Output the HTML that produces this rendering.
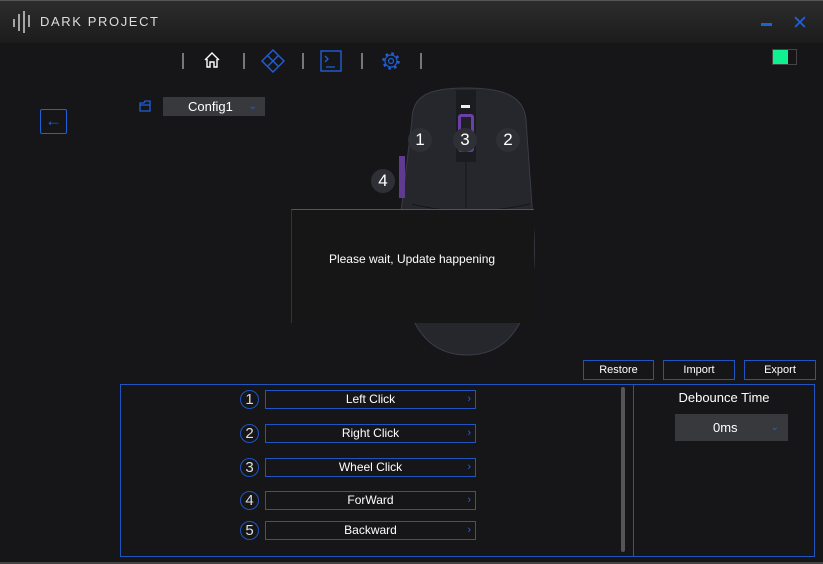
<!DOCTYPE html><html><head><style>
body{margin:0;width:823px;height:564px;background:#161618;font-family:"Liberation Sans",sans-serif;overflow:hidden;position:relative;color:#fff}
.a{position:absolute}
.tb{left:0;top:0;width:823px;height:42px;background:linear-gradient(#2c2c2c,#1c1c1c);border-top:1px solid #555}
.sep{width:2px;height:16px;background:#777;top:53px}
.btn{border:1px solid #1f55c0;font-size:11px;text-align:center;line-height:18px;height:18px;color:#fff}
.row{left:265px;width:209px;height:17px;border:1px solid #1f55c0;font-size:12px;text-align:center;line-height:17px}
.row span{position:absolute;right:4px;color:#2a5fd0;font-size:11px}
.num{left:240px;width:17px;height:17px;border:1px solid #1f55c0;border-radius:50%;font-size:15px;text-align:center;line-height:17px;color:#ddd}
.mn{width:24px;height:24px;border-radius:50%;background:#2e3036;font-size:17px;text-align:center;line-height:24px;color:#fff}
</style></head><body>
<div class="a tb"></div>
<svg class="a" style="left:13px;top:11px" width="20" height="22"><g stroke="#ddd" stroke-width="1.4"><line x1="1" y1="8" x2="1" y2="16"/><line x1="6" y1="3" x2="6" y2="20"/><line x1="11" y1="0" x2="11" y2="22"/><line x1="16" y1="4" x2="16" y2="16"/></g></svg>
<div class="a" style="left:40px;top:14px;font-size:13px;letter-spacing:1.6px;color:#ddd">DARK PROJECT</div>
<div class="a" style="left:761px;top:23px;width:11px;height:3px;background:#1f5fd8"></div>
<div class="a" style="left:792px;top:12px;font-size:19px;color:#1f5fd8">✕</div>
<div class="a sep" style="left:182px"></div><div class="a sep" style="left:243px"></div><div class="a sep" style="left:302px"></div><div class="a sep" style="left:361px"></div><div class="a sep" style="left:420px"></div>
<svg class="a" style="left:203px;top:52px" width="18" height="16"><path d="M2 8 L9 1 L16 8 M4 7 V15 H7 V10 H11 V15 H14 V7" fill="none" stroke="#fff" stroke-width="1.4"/></svg>
<svg class="a" style="left:261px;top:49px" width="24" height="24"><path d="M12 1 L23 12 L12 23 L1 12Z M6.5 6.5 L17.5 17.5 M17.5 6.5 L6.5 17.5" fill="none" stroke="#1f5fd8" stroke-width="1.4"/></svg>
<svg class="a" style="left:320px;top:50px" width="22" height="22"><rect x="1" y="1" width="20" height="20" fill="none" stroke="#1f5fd8" stroke-width="1.4"/><path d="M5 6 L8 9 L5 12 M6 17 H15" fill="none" stroke="#1f5fd8" stroke-width="1.3"/></svg>
<svg class="a" style="left:380px;top:50px" width="22" height="22"><circle cx="11" cy="11" r="7.5" fill="none" stroke="#1f5fd8" stroke-width="2.5" stroke-dasharray="2.6 3.3"/><circle cx="11" cy="11" r="6" fill="#161618" stroke="#1f5fd8" stroke-width="1.2"/><circle cx="11" cy="11" r="2.5" fill="none" stroke="#1f5fd8" stroke-width="1.2"/></svg>
<div class="a" style="left:772px;top:49px;width:23px;height:14px;border:1px solid #444"></div>
<div class="a" style="left:773px;top:50px;width:15px;height:14px;background:#10f090"></div>
<div class="a" style="left:40px;top:109px;width:25px;height:23px;border:1.5px solid #1f5fd8;border-radius:2px;color:#1f5fd8;font-size:17px;text-align:center;line-height:22px">←</div>
<svg class="a" style="left:139px;top:100px" width="13" height="12"><path d="M1 3 H5 L6 1 H11 V11 H1Z M1 5 H11" fill="none" stroke="#1f5fd8" stroke-width="1.3"/></svg>
<div class="a" style="left:163px;top:97px;width:102px;height:19px;background:#38393c;font-size:13px;line-height:19px"><span style="margin-left:25px">Config1</span><span style="position:absolute;right:8px;color:#2a5fd0;font-size:10px">⌄</span></div>
<svg class="a" style="left:396px;top:86px" width="142" height="272"><path d="M16 34 C16 9 34 2 70 2 C106 2 128 9 130 34 L137 134 C144 214 124 269 71 269 C18 269 0 214 4 134Z" fill="#25272d" stroke="#3a3c44"/><rect x="60" y="4" width="20" height="72" fill="#1b1c20"/><rect x="62" y="28" width="16" height="38" rx="3" fill="#6b3fa8"/><rect x="65" y="31" width="10" height="32" fill="#202126"/><rect x="65" y="19" width="9" height="3" fill="#eee"/><rect x="3" y="70" width="6" height="42" fill="#5e3a90"/><path d="M70 76 V122 M16 118 Q70 132 134 118" stroke="#15161a" fill="none"/></svg>
<div class="a mn" style="left:408px;top:128px">1</div><div class="a mn" style="left:453px;top:128px">3</div><div class="a mn" style="left:496px;top:128px">2</div><div class="a mn" style="left:371px;top:169px">4</div>
<div class="a" style="left:291px;top:209px;width:242px;height:113px;background:#161616;border-top:1px solid #555;border-left:1px solid #333"></div>
<div class="a" style="left:291px;top:252px;width:242px;text-align:center;font-size:12px">Please wait, Update happening</div>
<div class="a btn" style="left:583px;top:360px;width:69px">Restore</div>
<div class="a btn" style="left:663px;top:360px;width:70px">Import</div>
<div class="a btn" style="left:744px;top:360px;width:70px">Export</div>
<div class="a" style="left:120px;top:384px;width:512px;height:171px;border:1px solid #1f55c0"></div>
<div class="a" style="left:633px;top:384px;width:180px;height:171px;border:1px solid #1f55c0"></div>
<div class="a" style="left:621px;top:387px;width:4px;height:165px;background:#555;border-radius:2px"></div>
<div class="a num" style="top:390px">1</div><div class="a row" style="top:390px">Left Click<span>›</span></div>
<div class="a num" style="top:424px">2</div><div class="a row" style="top:424px">Right Click<span>›</span></div>
<div class="a num" style="top:458px">3</div><div class="a row" style="top:458px">Wheel Click<span>›</span></div>
<div class="a num" style="top:491px">4</div><div class="a row" style="top:491px">ForWard<span>›</span></div>
<div class="a num" style="top:521px">5</div><div class="a row" style="top:521px">Backward<span>›</span></div>
<div class="a" style="left:634px;top:390px;width:180px;text-align:center;font-size:13px">Debounce Time</div>
<div class="a" style="left:675px;top:414px;width:113px;height:27px;background:#38393c;font-size:13px;line-height:27px"><span style="margin-left:38px">0ms</span><span style="position:absolute;right:9px;color:#2a5fd0;font-size:10px">⌄</span></div>
<div class="a" style="left:0;top:562px;width:823px;height:2px;background:#444"></div>
</body></html>
